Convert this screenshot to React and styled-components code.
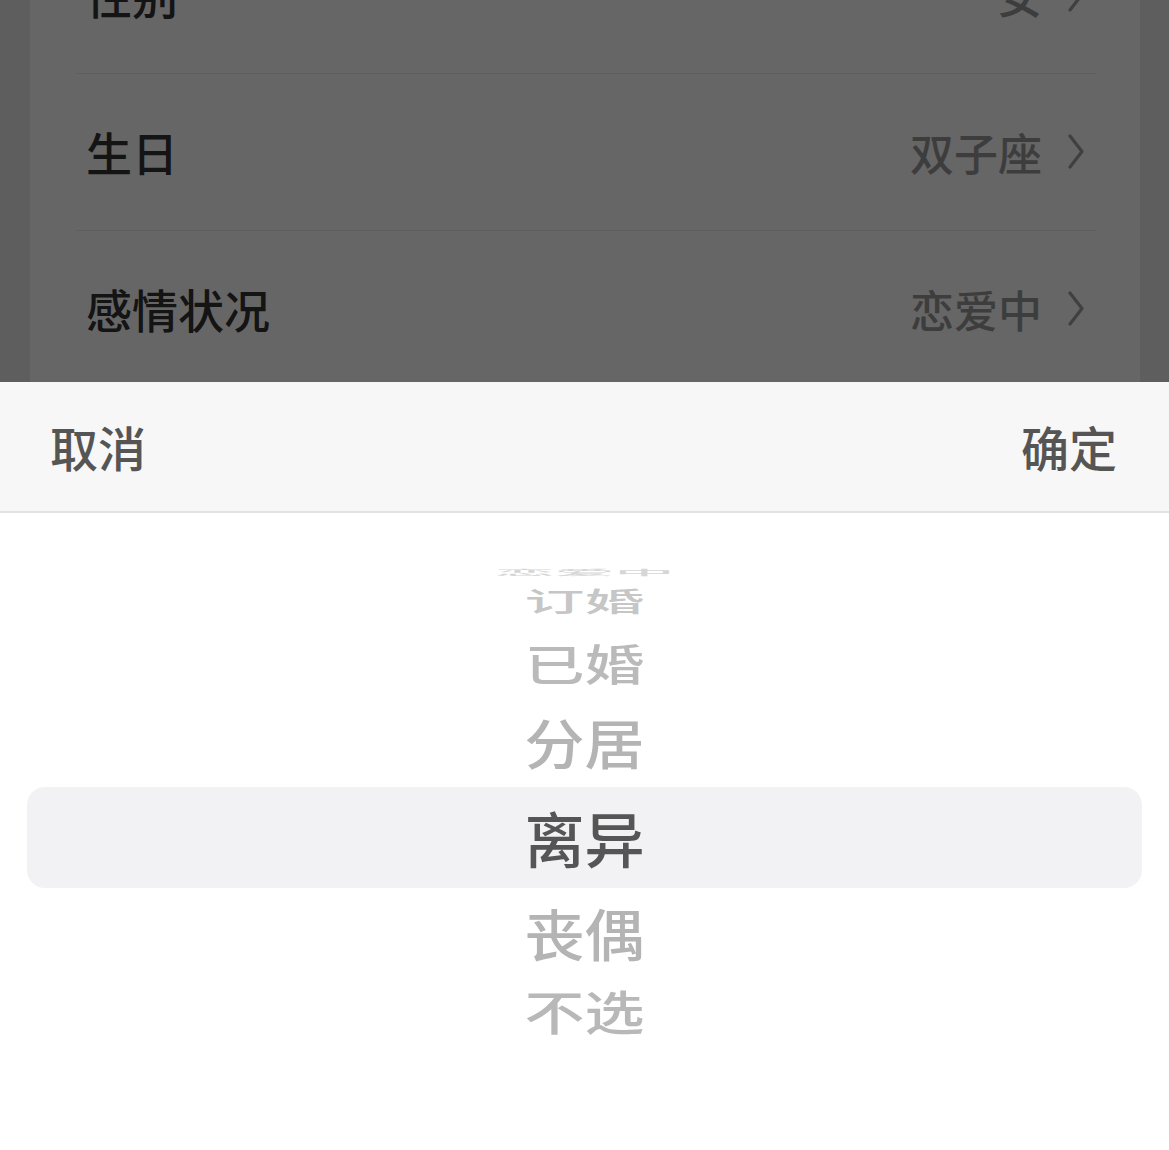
import React from "react";
import styled, { createGlobalStyle } from "styled-components";

const GlobalStyle = createGlobalStyle`
  html, body {
    margin: 0;
    padding: 0;
    background: #fff;
  }
  body {
    font-family: "Noto Sans CJK SC", "Noto Sans", sans-serif;
  }
  * {
    box-sizing: border-box;
  }
`;

// 뒤에 깔린 설정 화면 (스크롤된 상태)
const settings = [
  { label: "性别", value: "女" },
  { label: "生日", value: "双子座" },
  { label: "感情状况", value: "恋爱中" },
];

// 휠 아이템: 높이, 세로 압축, 색
const options = [
  { text: "恋爱中", h: 4, scale: 0.12, tone: "#d6d6d6" },
  { text: "订婚", h: 52, scale: 0.45, tone: "#c6c6c6" },
  { text: "已婚", h: 72, scale: 0.72, tone: "#bababa" },
  { text: "分居", h: 88, scale: 0.9, tone: "#b4b4b4" },
  { text: "离异", h: 102, scale: 1, tone: "#555555" },
  { text: "丧偶", h: 88, scale: 0.93, tone: "#b4b4b4" },
  { text: "不选", h: 68, scale: 0.78, tone: "#b8b8b8" },
];

const Chevron = () => (
  <svg width="16" height="35" viewBox="0 0 16 35" fill="none">
    <polyline
      points="2,2 14,17.5 2,33"
      stroke="#a0a0a0"
      strokeWidth="3.2"
      strokeLinecap="round"
      strokeLinejoin="round"
    />
  </svg>
);

const App = () => {
  return (
    <>
      <GlobalStyle />
      <Screen>
        <Backdrop>
          <SettingsCard>
            {settings.map((item) => (
              <Row key={item.label}>
                <Label>{item.label}</Label>
                <Value>
                  <span>{item.value}</span>
                  <Chevron />
                </Value>
              </Row>
            ))}
          </SettingsCard>
        </Backdrop>

        <Sheet>
          <SheetHeader>
            <Action>取消</Action>
            <Action>确定</Action>
          </SheetHeader>
          <Wheel>
            <Highlight />
            {options.map((opt) => (
              <WheelSlot key={opt.text} $h={opt.h}>
                <WheelText $scale={opt.scale} $tone={opt.tone}>
                  {opt.text}
                </WheelText>
              </WheelSlot>
            ))}
          </Wheel>
        </Sheet>
      </Screen>
    </>
  );
};

const Screen = styled.div`
  width: 100%;
  height: 1150px;
  display: flex;
  flex-direction: column;
  overflow: hidden;
`;

const Backdrop = styled.section`
  position: relative;
  height: 382px;
  flex-shrink: 0;
  overflow: hidden;
  background: #ececec;

  &::after {
    content: "";
    position: absolute;
    inset: 0;
    background: rgba(0, 0, 0, 0.6);
  }
`;

const SettingsCard = styled.div`
  margin: -83px 29px 0 30px;
  min-height: 470px;
  background: #fff;
`;

const Row = styled.div`
  height: 157px;
  margin: 0 44px 0 46px;
  padding: 0 12px 0 10px;
  display: flex;
  align-items: center;
  justify-content: space-between;
  border-bottom: 1px solid #ebebeb;
`;

const Label = styled.span`
  font-size: 46px;
  font-weight: 500;
  color: #333;
  line-height: 1.2;
`;

const Value = styled.div`
  display: flex;
  align-items: center;
  gap: 26px;
  font-size: 44px;
  font-weight: 500;
  line-height: 1.2;
  color: #999;
`;

const Sheet = styled.div`
  flex: 1;
  display: flex;
  flex-direction: column;
  background: #fff;
`;

const SheetHeader = styled.div`
  height: 131px;
  flex-shrink: 0;
  padding: 0 52px 0 50px;
  display: flex;
  align-items: center;
  justify-content: space-between;
  background: #f7f7f7;
  border-bottom: 2px solid #e3e3e3;
`;

const Action = styled.button`
  border: none;
  background: none;
  padding: 0;
  font-family: inherit;
  font-size: 48px;
  font-weight: 500;
  line-height: 1.3;
  color: #555;
`;

const Wheel = styled.div`
  position: relative;
  flex: 1;
  display: flex;
  flex-direction: column;
  align-items: center;
  padding-top: 57px;
`;

const Highlight = styled.div`
  position: absolute;
  top: 274px;
  left: 27px;
  right: 27px;
  height: 101px;
  border-radius: 18px;
  background: #f2f2f4;
`;

const WheelSlot = styled.div`
  position: relative;
  z-index: 1;
  height: ${(p) => p.$h}px;
  display: flex;
  align-items: center;
  justify-content: center;
`;

const WheelText = styled.span`
  display: block;
  font-size: 60px;
  line-height: 1;
  font-weight: 500;
  color: ${(p) => p.$tone};
  transform: scaleY(${(p) => p.$scale});
  white-space: nowrap;
`;

export default App;
